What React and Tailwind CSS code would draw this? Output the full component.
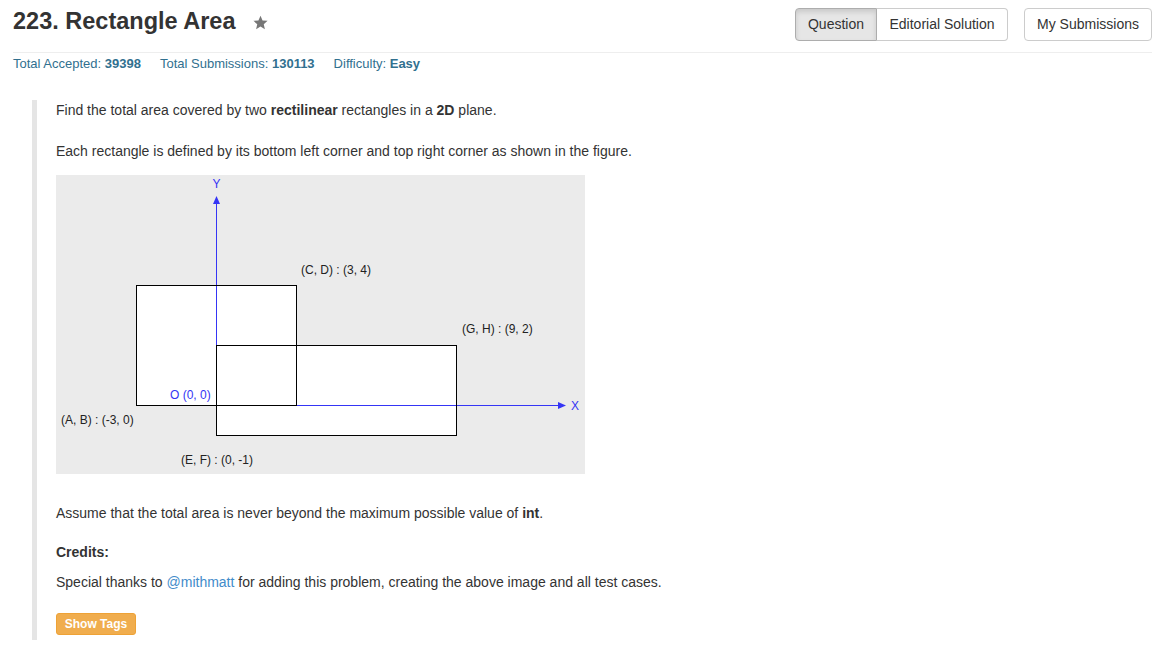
import React from "react";

function Diagram() {
  const blue = "#3535f5";
  const lbl = { fontSize: 12, fill: "#222", fontFamily: "'Liberation Sans', Arial, sans-serif" };
  return (
    <svg width="529" height="299" viewBox="0 0 529 299" className="block">
      <rect x="0" y="0" width="529" height="299" fill="#ebebeb" />
      <rect x="80.5" y="110.5" width="160" height="120" fill="#fff" />
      <line x1="160.5" y1="230" x2="160.5" y2="28" stroke={blue} strokeWidth="1" />
      <polygon points="160.5,21 157,29 164,29" fill={blue} />
      <rect x="160.5" y="170.5" width="240" height="90" fill="#fff" />
      <line x1="160" y1="230.5" x2="503" y2="230.5" stroke={blue} strokeWidth="1" />
      <polygon points="510,230.5 502,227 502,234" fill={blue} />
      <rect x="80.5" y="110.5" width="160" height="120" fill="none" stroke="#000" strokeWidth="1" />
      <rect x="160.5" y="170.5" width="240" height="90" fill="none" stroke="#000" strokeWidth="1" />
      <text x="160.5" y="13" textAnchor="middle" style={{ ...lbl, fill: blue }}>Y</text>
      <text x="515" y="234.5" style={{ ...lbl, fill: blue }}>X</text>
      <text x="245" y="99" style={lbl}>(C, D) : (3, 4)</text>
      <text x="406" y="158" style={lbl}>(G, H) : (9, 2)</text>
      <text x="114" y="224" style={{ ...lbl, fill: blue }}>O (0, 0)</text>
      <text x="5" y="249" style={lbl}>(A, B) : (-3, 0)</text>
      <text x="125" y="289" style={lbl}>(E, F) : (0, -1)</text>
    </svg>
  );
}

export default function App() {
  return (
    <div className="w-[1168px] h-[645px] bg-white overflow-hidden pl-[13px] pr-[16px] pt-[8px] text-[#333] font-['Liberation_Sans',Arial,sans-serif]">
      <div className="flex items-center justify-between h-[33px]">
        <div className="flex items-center pb-[5px]">
          <h1 className="text-[23.5px] font-bold leading-none text-[#333]">223. Rectangle Area</h1>
          <svg width="17" height="17" viewBox="0 0 24 24" className="ml-[16px] mt-[1px]">
            <path d="M12 2.5l2.9 6.6 7.1.6-5.4 4.7 1.6 7-6.2-3.7-6.2 3.7 1.6-7L2 9.7l7.1-.6z" fill="#777" />
          </svg>
        </div>
        <div className="flex items-center">
          <div className="flex">
            <button className="h-[33px] w-[82px] text-[14px] text-[#333] bg-[#e6e6e6] border border-[#adadad] rounded-l-[4px] shadow-[inset_0_3px_5px_rgba(0,0,0,0.125)]">Question</button>
            <button className="h-[33px] w-[131px] text-[14px] text-[#333] bg-white border border-l-0 border-[#ccc] rounded-r-[4px]">Editorial Solution</button>
          </div>
          <button className="ml-[16px] h-[33px] w-[128px] text-[14px] text-[#333] bg-white border border-[#ccc] rounded-[4px]">My Submissions</button>
        </div>
      </div>
      <div className="mt-[11px] border-t border-[#eee]" />
      <div className="mt-[2px] flex gap-[19px] text-[13px] leading-[17px] text-[#31708f]">
        <span>Total Accepted: <b>39398</b></span>
        <span>Total Submissions: <b>130113</b></span>
        <span>Difficulty: <b>Easy</b></span>
      </div>
      <div className="mt-[28px] ml-[19px] border-l-[5px] border-[#e5e5e5] pl-[19px] pb-[5px] text-[14px] leading-[20px] text-[#333]">
        <p>Find the total area covered by two <b>rectilinear</b> rectangles in a <b>2D</b> plane.</p>
        <p className="mt-[21px]">Each rectangle is defined by its bottom left corner and top right corner as shown in the figure.</p>
        <div className="mt-[14px]">
          <Diagram />
        </div>
        <p className="mt-[29px]">Assume that the total area is never beyond the maximum possible value of <b>int</b>.</p>
        <p className="mt-[19px] font-bold">Credits:</p>
        <p className="mt-[10px]">Special thanks to <span className="text-[#428bca]">@mithmatt</span> for adding this problem, creating the above image and all test cases.</p>
        <button className="mt-[21px] h-[22px] w-[80px] bg-[#f0ad4e] text-white text-[12px] font-bold rounded-[3px] border border-[#eea236]">Show Tags</button>
      </div>
    </div>
  );
}
